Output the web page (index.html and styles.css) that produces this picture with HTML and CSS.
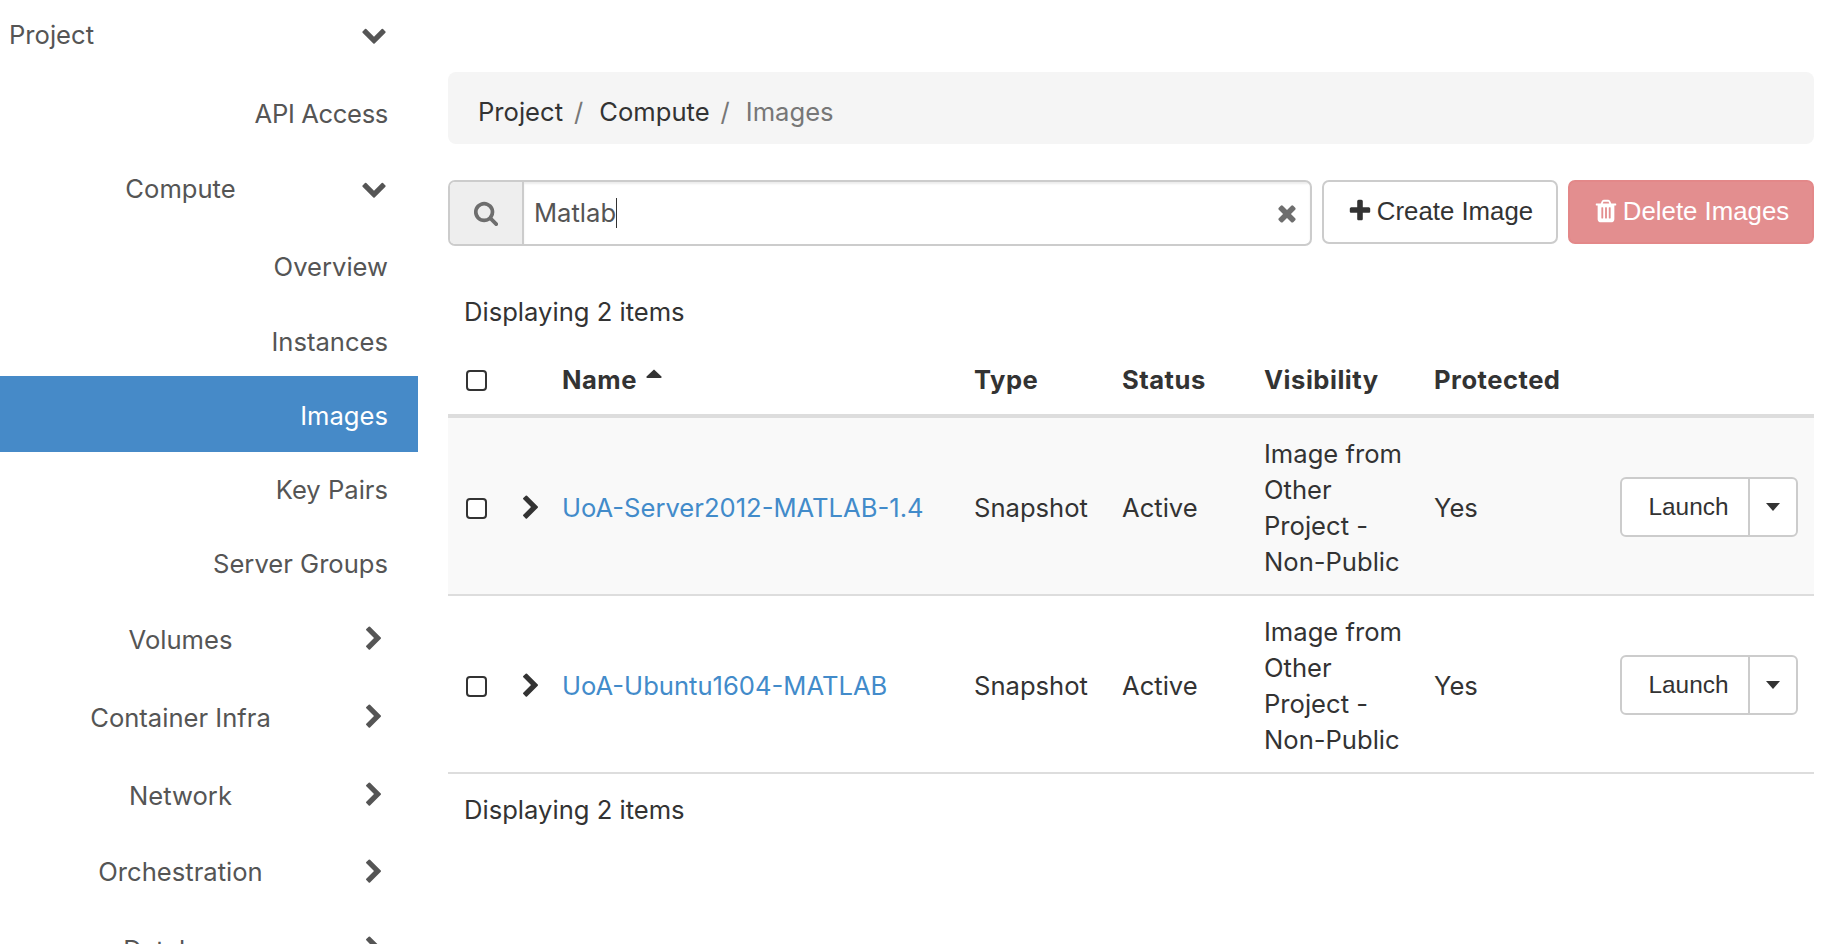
FILE: index.html
```html
<!DOCTYPE html>
<html lang="en">
<head>
<meta charset="utf-8">
<title>Images</title>
<link rel="stylesheet" href="styles.css">
</head>
<body>
<svg class="defs" aria-hidden="true">
  <symbol id="i-down" viewBox="0 0 1792 1792"><path d="M1683 808l-742 741q-19 19-45 19t-45-19l-742-741q-19-19-19-45.500t19-45.500l166-165q19-19 45-19t45 19l531 531 531-531q19-19 45-19t45 19l166 165q19 19 19 45.500t-19 45.500z"/></symbol>
  <symbol id="i-right" viewBox="0 0 1792 1792"><path d="M1363 877l-742 742q-19 19-45 19t-45-19l-166-166q-19-19-19-45t19-45l531-531-531-531q-19-19-19-45t19-45l166-166q19-19 45-19t45 19l742 742q19 19 19 45t-19 45z"/></symbol>
  <symbol id="i-search" viewBox="0 0 1792 1792"><path d="M1216 832q0-185-131.500-316.500t-316.500-131.500-316.500 131.500-131.500 316.500 131.500 316.500 316.500 131.500 316.500-131.500 131.500-316.500zm512 832q0 52-38 90t-90 38q-54 0-90-38l-343-342q-179 124-399 124-143 0-273.500-55.500t-225-150-150-225-55.500-273.500 55.500-273.500 150-225 225-150 273.500-55.500 273.500 55.500 225 150 150 225 55.500 273.500q0 220-124 399l343 343q37 37 37 90z"/></symbol>
  <symbol id="i-times" viewBox="0 0 1792 1792"><path d="M1490 1322q0 40-28 68l-136 136q-28 28-68 28t-68-28l-294-294-294 294q-28 28-68 28t-68-28l-136-136q-28-28-28-68t28-68l294-294-294-294q-28-28-28-68t28-68l136-136q28-28 68-28t68 28l294 294 294-294q28-28 68-28t68 28l136 136q28 28 28 68t-28 68l-294 294 294 294q28 28 28 68z"/></symbol>
  <symbol id="i-plus" viewBox="0 0 1792 1792"><path d="M1600 736v192q0 40-28 68t-68 28h-416v416q0 40-28 68t-68 28h-192q-40 0-68-28t-28-68v-416h-416q-40 0-68-28t-28-68v-192q0-40 28-68t68-28h416v-416q0-40 28-68t68-28h192q40 0 68 28t28 68v416h416q40 0 68 28t28 68z"/></symbol>
  <symbol id="i-trash" viewBox="0 0 1792 1792"><path d="M704 1376v-704q0-14-9-23t-23-9h-64q-14 0-23 9t-9 23v704q0 14 9 23t23 9h64q14 0 23-9t9-23zm256 0v-704q0-14-9-23t-23-9h-64q-14 0-23 9t-9 23v704q0 14 9 23t23 9h64q14 0 23-9t9-23zm256 0v-704q0-14-9-23t-23-9h-64q-14 0-23 9t-9 23v704q0 14 9 23t23 9h64q14 0 23-9t9-23zm-544-992h448l-48-117q-7-9-17-11h-317q-10 2-17 11zm928 32v64q0 14-9 23t-23 9h-96v948q0 83-47 143.500t-113 60.500h-832q-66 0-113-58.500t-47-141.500v-952h-96q-14 0-23-9t-9-23v-64q0-14 9-23t23-9h309l70-167q15-37 54-63t79-26h320q40 0 79 26t54 63l70 167h309q14 0 23 9t9 23z"/></symbol>
</svg>
<div class="page">
  <nav class="sidebar">
    <div class="group group-top group-open"><span class="group-label">Project</span><svg class="chev"><use href="#i-down"/></svg></div>
    <a class="leaf leaf-api">API Access</a>
    <div class="group group-open"><span class="group-label">Compute</span><svg class="chev"><use href="#i-down"/></svg></div>
    <a class="leaf leaf-first">Overview</a>
    <a class="leaf">Instances</a>
    <a class="leaf active">Images</a>
    <a class="leaf">Key Pairs</a>
    <a class="leaf">Server Groups</a>
    <div class="group"><span class="group-label">Volumes</span><svg class="chev"><use href="#i-right"/></svg></div>
    <div class="group"><span class="group-label">Container Infra</span><svg class="chev"><use href="#i-right"/></svg></div>
    <div class="group"><span class="group-label">Network</span><svg class="chev"><use href="#i-right"/></svg></div>
    <div class="group group-short"><span class="group-label">Orchestration</span><svg class="chev"><use href="#i-right"/></svg></div>
    <div class="group"><span class="group-label">Database</span><svg class="chev"><use href="#i-right"/></svg></div>
  </nav>
  <main class="content">
    <ol class="crumbs">
      <li class="crumb">Project</li>
      <li class="crumb-sep">/</li>
      <li class="crumb">Compute</li>
      <li class="crumb-sep">/</li>
      <li class="crumb crumb-current">Images</li>
    </ol>
    <div class="toolbar">
      <div class="search">
        <span class="search-addon"><svg class="icon-search"><use href="#i-search"/></svg></span>
        <div class="search-field">
          <span class="search-text">Matlab</span><span class="caret-bar"></span>
          <svg class="icon-clear"><use href="#i-times"/></svg>
        </div>
      </div>
      <button class="btn btn-create"><svg class="btn-icon"><use href="#i-plus"/></svg>Create Image</button>
      <button class="btn btn-delete"><svg class="btn-icon"><use href="#i-trash"/></svg>Delete Images</button>
    </div>
    <div class="count count-top">Displaying 2 items</div>
    <table class="grid">
      <colgroup>
        <col class="c-check"><col class="c-expand"><col class="c-name"><col class="c-type"><col class="c-status"><col class="c-vis"><col class="c-prot"><col class="c-act">
      </colgroup>
      <thead>
        <tr>
          <th class="cell-check"><input class="check" type="checkbox"></th>
          <th class="cell-expand"></th>
          <th>Name<svg class="sort" viewBox="0 0 16 9"><path d="M8 0.500 15.500 7.500Q16 9 14.500 9H1.500Q0 9 0.500 7.500Z"/></svg></th>
          <th>Type</th>
          <th>Status</th>
          <th>Visibility</th>
          <th>Protected</th>
          <th></th>
        </tr>
      </thead>
      <tbody>
        <tr class="row-odd">
          <td class="cell-check"><input class="check" type="checkbox"></td>
          <td class="cell-expand"><svg class="expand"><use href="#i-right"/></svg></td>
          <td><a class="name-link">UoA-Server2012-MATLAB-1.4</a></td>
          <td>Snapshot</td>
          <td>Active</td>
          <td>Image from Other Project - Non-Public</td>
          <td>Yes</td>
          <td class="cell-act">
            <div class="split"><span class="split-main">Launch</span><span class="split-toggle"><span class="tri"></span></span></div>
          </td>
        </tr>
        <tr>
          <td class="cell-check"><input class="check" type="checkbox"></td>
          <td class="cell-expand"><svg class="expand"><use href="#i-right"/></svg></td>
          <td><a class="name-link">UoA-Ubuntu1604-MATLAB</a></td>
          <td>Snapshot</td>
          <td>Active</td>
          <td>Image from Other Project - Non-Public</td>
          <td>Yes</td>
          <td class="cell-act">
            <div class="split"><span class="split-main">Launch</span><span class="split-toggle"><span class="tri"></span></span></div>
          </td>
        </tr>
      </tbody>
    </table>
    <div class="count count-bottom">Displaying 2 items</div>
  </main>
</div>
</body>
</html>
```

FILE: styles.css
```css
* { box-sizing: border-box; }
html, body { margin: 0; height: 100%; overflow: hidden; background: #fff; }
body { font-family: Inter, "Liberation Sans", sans-serif; font-size: 25.6px; line-height: 36px; color: #333; }
.defs { display: none; }
.page { display: flex; height: 944px; overflow: hidden; padding-right: 14px; }

.sidebar { flex: 0 0 418px; display: flex; flex-direction: column; color: #555; }
.group { flex: none; height: 78px; display: flex; align-items: center; }
.group-top { height: 70px; }
.group-short { height: 76px; }
.group-label { flex: 0 0 361px; text-align: center; padding-top: 2px; }
.group-open .group-label, .group-short .group-label { padding-top: 0; }
.group-top .group-label { text-align: left; padding-left: 9px; }
.chev { width: 26px; height: 26px; fill: #555; margin-top: 0; }
.group-open .chev { margin-top: -3px; }
.leaf { flex: none; height: 74px; display: flex; align-items: center; justify-content: flex-end; padding: 2px 30px 0 0; }
.leaf-api { margin-top: 6px; letter-spacing: -.35px; }
.leaf-first { height: 76px; }
.active { height: 76px; margin-top: -2px; padding-top: 4px; background: #468ac8; color: #fff; }

.content { flex: 1; min-width: 0; margin-left: 30px; padding-top: 72px; }
.crumbs { list-style: none; margin: 0; height: 72px; padding: 7px 30px 0; display: flex; align-items: center; background: #f5f5f5; border-radius: 8px; }
.crumb-sep { color: #777; margin: 0 16px 0 11px; }
.crumb-current { color: #777; }

.toolbar { display: flex; align-items: flex-start; margin-top: 36px; gap: 10px; }
.search { flex: 0 0 864px; height: 66px; display: flex; border: 2px solid #ccc; border-radius: 7px; overflow: hidden; }
.search-addon { flex: 0 0 74px; display: flex; align-items: center; justify-content: center; background: #eee; border-right: 2px solid #ccc; }
.icon-search { width: 26px; height: 26px; fill: #6e6e6e; }
.search-field { flex: 1; display: flex; align-items: center; padding-left: 10px; padding-right: 10px; color: #555; box-shadow: inset 0 2px 2px rgba(0,0,0,.075); }
.caret-bar { width: 1px; height: 30px; background: #333; }
.icon-clear { width: 26px; height: 26px; margin-left: auto; fill: #6e6e6e; }

.btn { height: 64px; border-radius: 7px; border: 2px solid #ccc; background: #fff; font-family: "Liberation Sans", Arial, sans-serif; font-size: 25.8px; color: #333; display: flex; align-items: center; justify-content: center; padding: 0 0 2px; }
.btn-create { flex: 0 0 236px; }
.btn-delete { flex: 0 0 246px; background: #e38e8f; border-color: #e38889; color: #fff; }
.btn-icon { width: 26px; height: 26px; margin-right: 4px; fill: currentColor; flex: none; }

.count { padding: 16px; height: 68px; }
.count-top { margin-top: 32px; }
.count-bottom { padding-top: 18px; }

.grid { width: 100%; table-layout: fixed; border-collapse: separate; border-spacing: 0; }
.c-check { width: 66px; } .c-expand { width: 32px; } .c-name { width: 412px; } .c-type { width: 148px; } .c-status { width: 142px; } .c-vis { width: 170px; } .c-prot { width: 172px; }
th, td { text-align: left; vertical-align: middle; font-weight: 400; }
th { padding: 16px; font-weight: 700; letter-spacing: .5px; border-bottom: 4px solid #ddd; }
td { padding: 18px 16px 14px; border-bottom: 2px solid #ddd; }
.row-odd td { background: #f9f9f9; }
th.cell-check { padding: 0 0 0 18px; }
td.cell-check { padding: 4px 0 0 18px; }
th.cell-expand { padding: 0; }
td.cell-expand { padding: 4px 0 0; }
.check { appearance: none; display: block; width: 21px; height: 21px; margin: 0; border: 2px solid #333; border-radius: 4px; background: #fff; }
.expand { display: block; width: 26px; height: 26px; fill: #333; margin: 0 0 0 4px; }
.sort { width: 16px; height: 9px; fill: #333; margin-left: 9px; vertical-align: 11px; }
.name-link { color: #428bca; }
td.cell-act { padding: 2px 16px 0 0; }
.split { width: 178px; height: 60px; margin-left: auto; display: flex; border: 2px solid #ccc; border-radius: 6px; background: #fff; font-family: "Liberation Sans", Arial, sans-serif; font-size: 24.4px; }
.split-main { flex: 0 0 128px; display: flex; align-items: center; justify-content: center; padding-left: 7px; border-right: 2px solid #ccc; }
.split-toggle { flex: 1; display: flex; align-items: center; justify-content: center; }
.tri { width: 0; height: 0; border-left: 7px solid transparent; border-right: 7px solid transparent; border-top: 8px solid #333; }
```
